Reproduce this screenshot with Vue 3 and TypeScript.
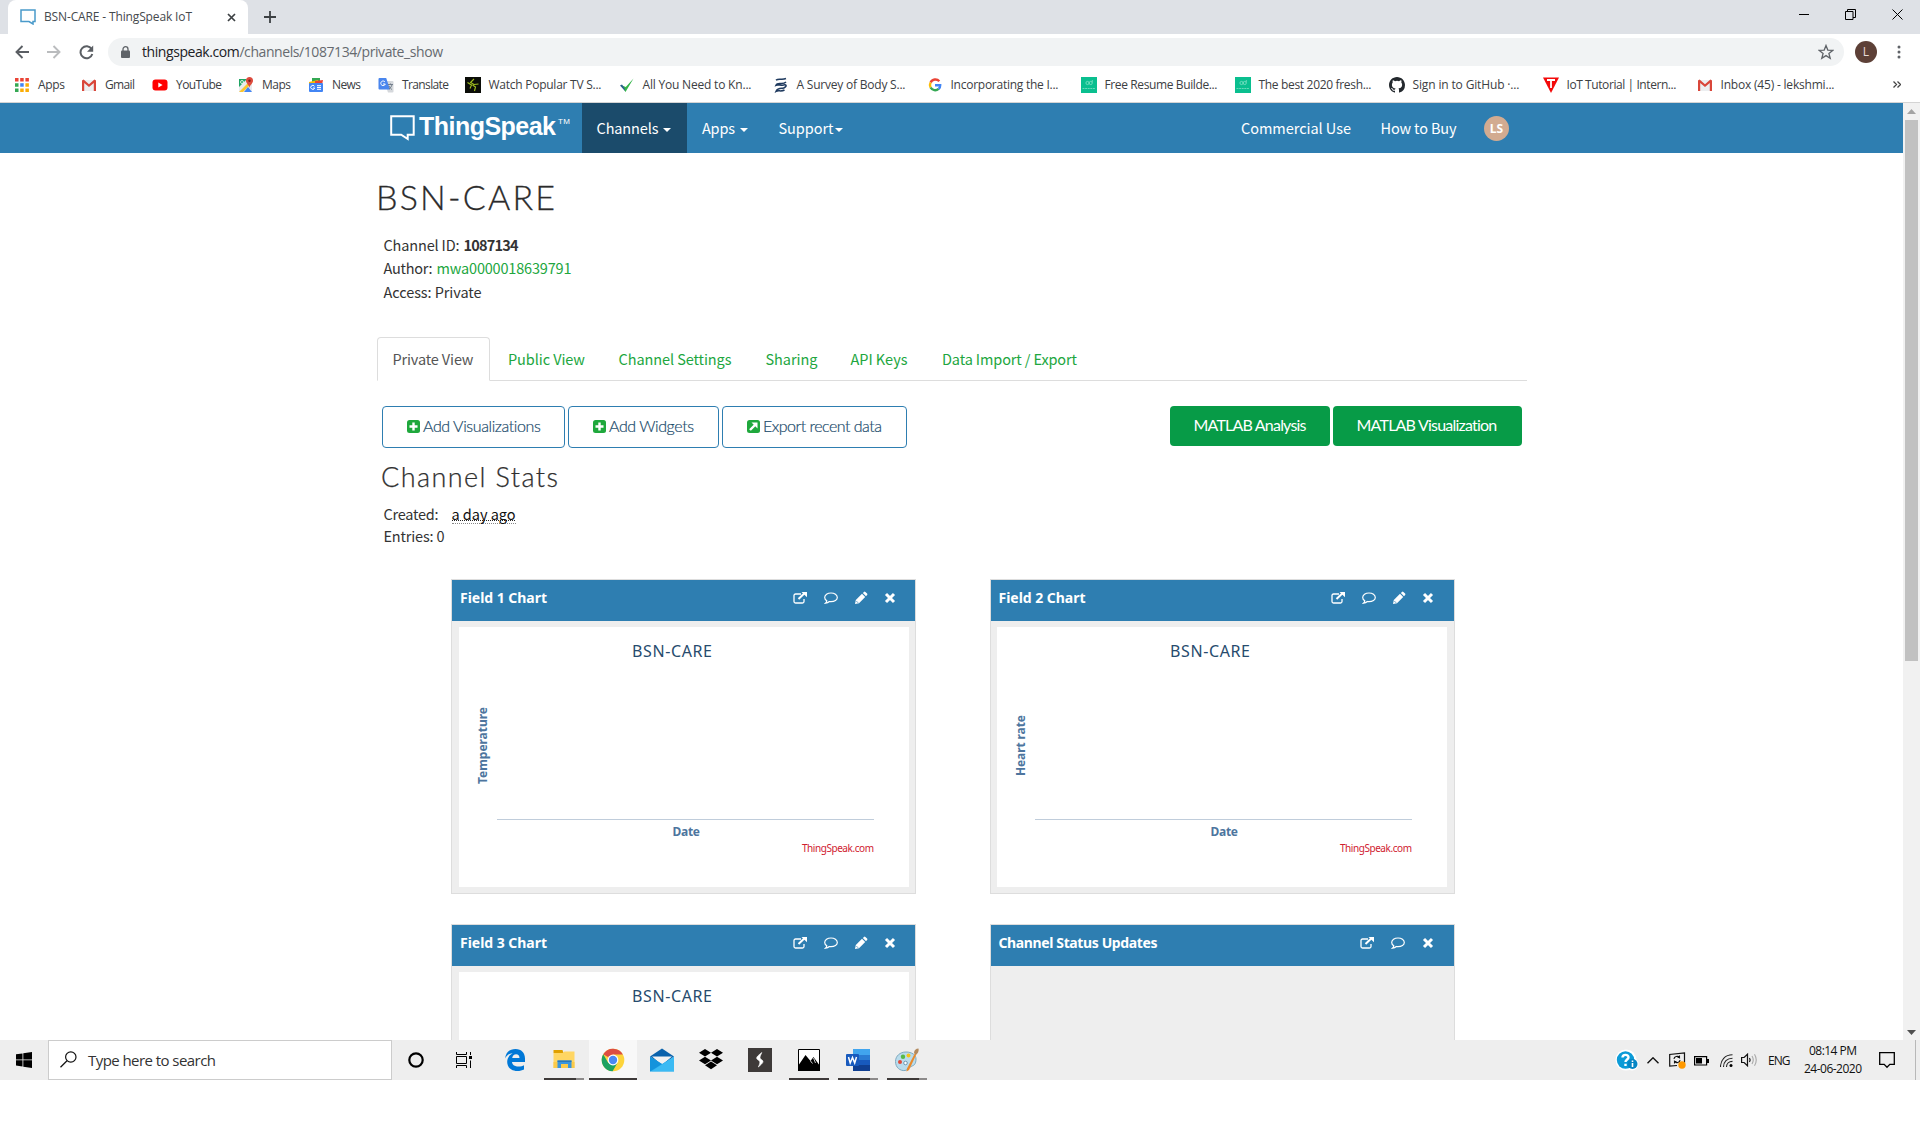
<script setup lang="ts">
interface Glyph { w: number; h: number; body: string }
interface Bookmark { label: string; width: number; cell: number; icon: string }
interface Panel { title: string; width: number; axis?: string; axisLen?: number; chart: boolean }
interface TaskItem { cell: number; w: number; h: number; body: string; line?: number; tail?: boolean; active?: boolean }

// Tracks a label so that it fills the given measure in pixels.
const vFit = {
  mounted(el: HTMLElement, binding: { value: number }) {
    const n = (el.textContent ?? '').trim().length
    const natural = el.getBoundingClientRect().width
    if (n > 1) {
      const spacing = (binding.value - natural) / (n - 1)
      el.style.letterSpacing = `${spacing.toFixed(3)}px`
      el.style.marginRight = `${(-spacing).toFixed(3)}px`
    }
  },
}

const gmail = '<path d="M1 3h14v11H1z" fill="#eceff1"/><path d="M1 3.4v10.6h2.2V6L8 10l4.8-4v8H15V3.4L13.4 2.500 8 7.200 2.600 2.500z" fill="#d9463a"/>'
const novo = '<path d="M0 0h16v16H0z" fill="#0abf8f"/><g fill="none" stroke="#8fe5cb" stroke-width=".7"><circle cx="6.500" cy="6" r="1.600"/><circle cx="9.700" cy="6" r="1.600"/><path d="M11.300 3V6M1.500 11.500h13" stroke-dasharray="2 .6"/></g>'

const bookmarks: Bookmark[] = [
  { label: 'Apps', width: 27, cell: 67, icon: '<g fill="#ea4335"><path d="M1 1h3.500v3.500H1zM6.200 1h3.500v3.500H6.200zM11.400 1h3.500v3.500h-3.500z"/></g><path d="M1 6.200h3.500v3.500H1zM1 11.400h3.500v3.500H1z" fill="#34a853"/><path d="M6.200 6.200h3.500v3.500H6.200z" fill="#4285f4"/><path d="M11.400 6.200h3.500v3.500h-3.500zM6.200 11.400h3.500v3.500H6.200zM11.400 11.400h3.500v3.500h-3.500z" fill="#fbad05"/>' },
  { label: 'Gmail', width: 30, cell: 71, icon: gmail },
  { label: 'YouTube', width: 46, cell: 86, icon: '<rect x=".5" y="2.500" width="15" height="11" rx="3" fill="#f00"/><path d="M6.300 5.500v5l4.300-2.500z" fill="#fff"/>' },
  { label: 'Maps', width: 29, cell: 70, icon: '<path d="M1 2h13v13H1z" fill="#e8eaed"/><path d="M1 2h8L1 10z" fill="#1fa463"/><path d="M1 15 13 3h1v3L5 15z" fill="#fbc52d"/><path d="M6 15 10 10l4 5z" fill="#4285f4"/><path d="M11.500 0a3.500 3.500 0 0 1 3.500 3.700C15 6.500 11.900 7.500 11.500 11c-.4-3.500-3.500-4.500-3.500-7.300A3.500 3.500 0 0 1 11.500 0z" fill="#dd4b3e"/><circle cx="11.500" cy="3.700" r="1.200" fill="#7a1e17"/><circle cx="4" cy="5" r="1.500" fill="none" stroke="#fff" stroke-width=".8"/>' },
  { label: 'News', width: 29, cell: 70, icon: '<path d="M4 1h8v5H4z" fill="#34a853"/><path d="m1 5 9-2 1 5H1z" fill="#fbbc04"/><path d="m7 4 8-1-1 5H7z" fill="#ea4335"/><rect x="1" y="6" width="14" height="9" rx="1" fill="#4285f4"/><path d="M6.500 9.300A2 2 0 1 0 6.700 11H5M9 8.700h4M9 10.500h4M9 12.300h4" fill="none" stroke="#fff"/>' },
  { label: 'Translate', width: 47, cell: 86.500, icon: '<path d="M6 4h8.500a1 1 0 0 1 1 1v9.500a1 1 0 0 1-1 1H10z" fill="#d5d8dc"/><path d="M1.500 1h6.700L12 12.500H1.500a1 1 0 0 1-1-1V2a1 1 0 0 1 1-1z" fill="#4a86ee"/><path d="M7 5A2.300 2.300 0 1 0 7.300 7H5" fill="none" stroke="#fff"/><path d="M10 7.500h5M12.500 6.500v1M14 7.500c-.5 2-1.500 3.500-3 4.500M11 9c1 2 2 3 3 3.500" fill="none" stroke="#6b7785" stroke-width=".9"/>' },
  { label: 'Watch Popular TV S...', width: 113, cell: 154, icon: '<path d="M0 0h16v16H0z" fill="#0b0d08"/><path d="M9 2 5.500 5.500 9 7.500l4.500-.5M2.500 5.500l4 2.500-1.500 3.500M7.500 8l3 2-1 4" fill="none" stroke="#a4c220" stroke-width="1.100"/>' },
  { label: 'All You Need to Kn...', width: 109, cell: 154, icon: '<path d="m2 8 4.500 7L14.500 1.500 6.800 10z" fill="#34b54a"/><path d="M1 8.500 3 7.500l2.500 4L6 14z" fill="#2a5d8f"/>' },
  { label: 'A Survey of Body S...', width: 109, cell: 154, icon: '<path d="M3 3.200C6 .8 8.500 3.500 13 1.500M13 5C10 8.500 4.500 4.500 3 8.200c2.500-1.200 6 1.200 9-.5 3 .8-1 3.800-3 3.500-3 0-5 .5-6 3.200 2.500-1.500 5 .6 8.500-1.400" fill="none" stroke="#1f3a5f" stroke-width="1.500"/>' },
  { label: 'Incorporating the I...', width: 108, cell: 154, icon: '<g fill="none" stroke-width="2.400"><path d="M12.300 4.300A5.200 5.200 0 0 0 3.600 5.500" stroke="#ea4335"/><path d="M3.600 5.500a5.200 5.200 0 0 0 0 5" stroke="#fbbc05"/><path d="M3.600 10.500a5.200 5.200 0 0 0 8 1.400" stroke="#34a853"/><path d="M11.600 12c1-.9 1.600-2.200 1.600-3.800H8" stroke="#4285f4"/></g>' },
  { label: 'Free Resume Builde...', width: 113, cell: 154, icon: novo },
  { label: 'The best 2020 fresh...', width: 113, cell: 154, icon: novo },
  { label: 'Sign in to GitHub ·...', width: 107, cell: 154, icon: '<path fill="#24292e" d="M8 0C3.580 0 0 3.580 0 8c0 3.540 2.290 6.530 5.470 7.590.4.070.55-.17.55-.38 0-.19-.01-.82-.01-1.490-2.010.37-2.530-.49-2.690-.94-.09-.23-.48-.94-.82-1.130-.28-.15-.68-.52-.01-.53.63-.01 1.080.58 1.230.82.72 1.210 1.870.87 2.330.66.070-.52.28-.87.51-1.070-1.780-.2-3.640-.89-3.640-3.950 0-.87.31-1.590.82-2.150-.08-.2-.36-1.020.080-2.120 0 0 .67-.21 2.200.82a7.400 7.400 0 0 1 4 0c1.530-1.040 2.200-.82 2.200-.82.44 1.100.16 1.920.080 2.120.51.56.82 1.270.82 2.150 0 3.070-1.870 3.750-3.650 3.950.29.25.54.73.54 1.480 0 1.070-.01 1.930-.01 2.200 0 .21.15.46.55.38A8 8 0 0 0 16 8c0-4.420-3.580-8-8-8z"/>' },
  { label: 'IoT Tutorial | Intern...', width: 110, cell: 154, icon: '<path d="M0 .5h16L8 16z" fill="#f30a0a"/><path d="M4 3h8M8 3v8" stroke="#fff" stroke-width="1.800"/>' },
  { label: 'Inbox (45) - lekshmi...', width: 114, cell: 154, icon: gmail },
]

const tabs = [
  { label: 'Public View', width: 77, cell: 110.500 },
  { label: 'Channel Settings', width: 113, cell: 147 },
  { label: 'Sharing', width: 52, cell: 85 },
  { label: 'API Keys', width: 57, cell: 91.500 },
  { label: 'Data Import / Export', width: 135, cell: 140 },
]

const plus = '<rect width="13" height="13" rx="2.500" fill="#1fa83c"/><path d="M6.500 2.500v8M2.500 6.500h8" stroke="#fff" stroke-width="2.400"/>'
const out = '<rect width="13" height="13" rx="2.500" fill="#1fa83c"/><path d="M3 10 8.500 4.500" stroke="#fff" stroke-width="2.400"/><path d="M4.500 2.500h6v6z" fill="#fff"/>'
const actions = [
  { label: 'Add Visualizations', width: 118, box: 183, icon: plus },
  { label: 'Add Widgets', width: 85, box: 151, icon: plus },
  { label: 'Export recent data', width: 119, box: 185, icon: out },
]

const panels: Panel[] = [
  { title: 'Field 1 Chart', width: 87, axis: 'Temperature', axisLen: 77, chart: true },
  { title: 'Field 2 Chart', width: 87, axis: 'Heart rate', axisLen: 61, chart: true },
  { title: 'Field 3 Chart', width: 87, chart: true },
  { title: 'Channel Status Updates', width: 159, chart: false },
]

const tools: Record<string, Glyph> = {
  open: { w: 14, h: 14, body: '<path d="M8 3H2.500A1.500 1.500 0 0 0 1 4.500v6A1.500 1.500 0 0 0 2.500 12h7a1.500 1.500 0 0 0 1.500-1.500V8" fill="none" stroke="#fff" stroke-width="1.300"/><path d="M5.500 8 12 1.800" stroke="#fff" stroke-width="2"/><path d="M8.500 1H14v5.300z" fill="#fff"/>' },
  talk: { w: 14, h: 14, body: '<path d="M7 2c3.500 0 6.300 1.900 6.300 4.400S10.500 10.700 7 10.700q-1 0-1.700-.2C4.300 11.500 3 12 1.500 12.200c.8-.8 1.200-1.400 1.300-2.500C1.500 8.900.7 7.700.7 6.400.7 3.900 3.500 2 7 2z" fill="none" stroke="#fff" stroke-width="1.200"/>' },
  edit: { w: 14, h: 14, body: '<path d="m1 13 .8-4L8 2.800 11.200 6 5 12.200zM8.800 2 10 .9a1 1 0 0 1 1.400 0l1.700 1.700a1 1 0 0 1 0 1.400L12 5.200z" fill="#fff"/><path d="m2.500 10.200 1.500 1.500" stroke="#2e7eb1" stroke-width=".9"/>' },
  shut: { w: 12, h: 14, body: '<path d="m2 3 8 8M10 3l-8 8" stroke="#fff" stroke-width="3"/>' },
}
const toolsOf = (p: Panel) => (p.chart ? ['open', 'talk', 'edit', 'shut'] : ['open', 'talk', 'shut'])

const tasks: TaskItem[] = [
  { cell: 48, w: 22, h: 24, body: '<path d="M1 10.500C2 4 6 1 11.500 1 17.500 1 21 5 21 10.500V14H8c.2 3 3 4.500 6.500 4.500 2.300 0 4.300-.6 5.500-1.300v4.300c-1.600.9-4 1.500-6.700 1.500C7 23 3.200 19 3.200 14c0-4 2-7 5.500-8.700C4.500 5.500 2.500 7.700 1 10.500zM8.200 10h7.300c0-2.400-1.200-3.800-3.400-3.800S8.600 7.600 8.200 10z" fill="#0078d7"/>' },
  { cell: 49, w: 22, h: 24, line: 40, tail: true, body: '<path d="M.5 4V2h9l1 3h-10z" fill="#e0a000"/><path d="M.5 5h9l2-1.500h10V20H.5z" fill="#ffd663"/><path d="M.5 14h21v6H.5z" fill="#fbca4a"/><path d="M4.500 20v-7.500h14V20H15v-4H8v4z" fill="#3a96dd"/><path d="M4.500 12.500h14V14h-14z" fill="#2677bd"/>' },
  { cell: 49, w: 24, h: 24, line: 48, active: true, body: '<circle cx="12" cy="12" r="11.300" fill="#fdd43b"/><path d="M12 12 2.200 6.300A11.300 11.300 0 0 1 21.900 6.600H12z" fill="#dc4e41"/><path d="M2.200 6.300A11.300 11.300 0 0 0 11.600 23.300L16.500 14.800 7.300 15z" fill="#1ca261"/><circle cx="12" cy="12" r="5.400" fill="#fff"/><circle cx="12" cy="12" r="4.200" fill="#4a89f3"/>' },
  { cell: 49, w: 24, h: 24, body: '<path d="M0 8.500 12 .5l12 8-12 9z" fill="#0a62ac"/><path d="M2 8.500h20L12 17z" fill="#f2f2f2"/><path d="M0 8.800v14.700h24V8.800L12 16z" fill="#28a8ea"/><path d="m0 8.800 12 7.200L0 23.500z" fill="#1493dc"/><path d="M24 8.800v14.700H1z" fill="#42c0f5" opacity=".75"/>' },
  { cell: 49, w: 24, h: 24, body: '<path d="m6 1 6 3.700L6 8.500 0 4.700zM18 1l6 3.700-6 3.800-6-3.800zM6 8.800l6 3.800-6 3.700-6-3.700zM18 8.800l6 3.800-6 3.700-6-3.700zM12 13.600l6 3.700-6 4-6-4z"/>' },
  { cell: 49, w: 24, h: 24, body: '<path d="M0 0h24v24H0z" fill="#3e3a39"/><path d="M13.800 4.500C9 8.500 7 10 10.200 12c2 1.200 2.300 2.500.1 7C15 15 16.500 13.500 13.300 11.500c-2-1.200-1.500-2.500.5-7z" fill="#fff" stroke="#fff" stroke-width=".6"/>' },
  { cell: 49, w: 22, h: 22, line: 40, body: '<path d="M.5.500h21v21H.5z" fill="#fff" stroke="#000"/><path d="M0 22v-5L7.500 6l5 6 3-4L22 17v5z"/><path d="m12.500 12 2 2.500M15.500 9l2 5" stroke="#fff" stroke-width=".8"/>' },
  { cell: 49, w: 24, h: 22, line: 40, tail: true, body: '<path d="M7 0h17v6H7z" fill="#41a5ee"/><path d="M7 6h17v5.500H7z" fill="#2b7cd3"/><path d="M7 11h17v5.500H7z" fill="#185abd"/><path d="M7 16h17v6H7z" fill="#103f91"/><rect y="5" width="13" height="12" rx="1" fill="#185abd"/><path d="m2.500 8 1.700 6L6.500 8.500l2.200 5.500L10.500 8" fill="none" stroke="#fff" stroke-width="1.500"/>' },
  { cell: 49, w: 24, h: 24, line: 40, tail: true, body: '<path d="M11 4c6 0 10 3 10 7 0 5-2 6.500-4 7-3 .8-3 4-7 4.500-5 .6-9.500-3-9.500-9C.5 8 5 4 11 4z" fill="#b9dcec" stroke="#7fa9bf"/><circle cx="5" cy="14" r="2" fill="#e04a3a"/><circle cx="8" cy="8.800" r="2.200" fill="#57b947"/><circle cx="13.500" cy="7.500" r="2" fill="#f5c21b"/><circle cx="10.500" cy="15" r="1.800" fill="#fff" stroke="#6e97ae"/><path d="m20 5 1.500 1L14 22l-2.500 1.500.5-3z" fill="#e98a2c"/><path d="M19 5c0-3 2-4.500 4.500-4.500C24 3 23 6 20.500 6.500z" fill="#b38a5e"/>' },
]
</script>

<template>
  <div class="screen">
    <header class="browser">
      <div class="strip">
        <div class="tab">
          <svg class="tab-icon" width="16" height="16" viewBox="0 0 16 16"><path d="M1 1h14v11.500h-2V15l-4-2.500H1z" fill="#fff" stroke="#4a9aca" stroke-width="1.500" /></svg>
          <div class="tab-title"><span v-fit="148">BSN-CARE - ThingSpeak IoT</span></div>
          <svg width="9" height="9" viewBox="0 0 9 9"><path d="m1 1 7 7M8 1 1 8" stroke="#3c4043" stroke-width="1.700" /></svg>
        </div>
        <svg class="new-tab" width="12" height="12" viewBox="0 0 12 12"><path d="M6 0v12M0 6h12" stroke="#3c4043" stroke-width="1.800" /></svg>
        <div class="window-buttons">
          <svg width="10" height="11" viewBox="0 0 10 11"><path d="M0 5.500h10" stroke="#000" /></svg>
          <svg width="11" height="11" viewBox="0 0 11 11"><path d="M.5 2.500h7.500v8H.5zM2.500 2.500v-2h8v8H8" fill="none" stroke="#000" /></svg>
          <svg width="11" height="11" viewBox="0 0 11 11"><path d="m.5.500 10 10M10.500.500l-10 10" stroke="#000" /></svg>
        </div>
      </div>
      <div class="toolbar">
        <svg width="14" height="14" viewBox="0 0 14 14"><path d="M14 7H1.500M7.500 1l-6 6 6 6" fill="none" stroke="#5a5e63" stroke-width="1.900" /></svg>
        <svg width="14" height="14" viewBox="0 0 14 14"><path d="M0 7h12.500M6.500 1l6 6-6 6" fill="none" stroke="#babcbe" stroke-width="1.900" /></svg>
        <svg width="15" height="15" viewBox="0 0 15 15"><path d="M12.600 4A6 6 0 1 0 13.300 9" fill="none" stroke="#5a5e63" stroke-width="2" /><path d="M14.200.500v6.300H8z" fill="#5a5e63" /></svg>
        <div class="address">
          <svg width="9" height="12" viewBox="0 0 9 12"><rect y="4.500" width="9" height="7.500" rx="1" fill="#5f6368" /><path d="M2 5V3.200a2.500 2.500 0 0 1 5 0V5" fill="none" stroke="#5f6368" stroke-width="1.300" /></svg>
          <span v-fit="301" class="url"><b>thingspeak.com</b>/channels/1087134/private_show</span>
          <svg class="star" width="16" height="16" viewBox="0 0 16 16"><path d="m8 1.500 1.800 4.600 4.900.3-3.800 3.100 1.300 4.800L8 11.600l-4.200 2.700 1.300-4.800-3.800-3.100 4.900-.3z" fill="none" stroke="#5f6368" stroke-width="1.300" /></svg>
        </div>
        <div class="profile">L</div>
        <svg class="more" width="4" height="14" viewBox="0 0 4 14"><g fill="#5f6368"><circle cx="2" cy="2" r="1.500" /><circle cx="2" cy="7" r="1.500" /><circle cx="2" cy="12" r="1.500" /></g></svg>
      </div>
      <nav class="bookmarks">
        <div v-for="b in bookmarks" :key="b.label" class="bookmark" :style="{ width: b.cell + 'px' }">
          <svg width="16" height="16" viewBox="0 0 16 16" v-html="b.icon"></svg>
          <span v-fit="b.width">{{ b.label }}</span>
        </div>
        <svg class="overflow" width="8" height="7" viewBox="0 0 8 7"><path d="m.5.500 3 3-3 3M4.500.500l3 3-3 3" fill="none" stroke="#444" stroke-width="1.300" /></svg>
      </nav>
    </header>

    <div class="viewport">
      <main class="page">
        <div class="navbar">
          <div class="brand">
            <svg width="25" height="26" viewBox="0 0 25 26"><path d="M1.200 1.200h22.500v18.500h-6V24l-6.500-4.300h-10z" fill="none" stroke="#fff" stroke-width="2" /></svg>
            <span v-fit="137" class="brand-name">ThingSpeak</span><span v-fit="12" class="tm">TM</span>
          </div>
          <div class="menu active"><span v-fit="62">Channels</span><i class="caret"></i></div>
          <div class="menu apps"><span v-fit="33">Apps</span><i class="caret"></i></div>
          <div class="menu support"><span v-fit="55">Support</span><i class="caret"></i></div>
          <div class="nav-right">
            <span class="link-a"><span v-fit="110">Commercial Use</span></span>
            <span class="link-b"><span v-fit="76">How to Buy</span></span>
            <span class="user">LS</span>
          </div>
        </div>

        <div class="content">
          <h1><span v-fit="179">BSN-CARE</span></h1>
          <div class="meta">
            <p><span v-fit="76">Channel ID:</span><strong v-fit="55">1087134</strong></p>
            <p><span v-fit="49">Author:</span><a v-fit="135">mwa0000018639791</a></p>
            <p><span v-fit="98">Access: Private</span></p>
          </div>

          <div class="tabs">
            <div class="current"><span v-fit="81">Private View</span></div>
            <div v-for="t in tabs" :key="t.label" class="other" :style="{ width: t.cell + 'px' }"><span v-fit="t.width">{{ t.label }}</span></div>
          </div>

          <div class="actions">
            <div v-for="a in actions" :key="a.label" class="outline" :style="{ width: a.box + 'px' }">
              <svg width="13" height="13" viewBox="0 0 13 13" v-html="a.icon"></svg>
              <span v-fit="a.width">{{ a.label }}</span>
            </div>
            <div class="matlab first"><span v-fit="113">MATLAB Analysis</span></div>
            <div class="matlab second"><span v-fit="141">MATLAB Visualization</span></div>
          </div>

          <h2><span v-fit="177">Channel Stats</span></h2>
          <div class="stats">
            <p><span v-fit="55">Created:</span><span class="ago"><span v-fit="64">a day ago</span></span></p>
            <p><span v-fit="61">Entries: 0</span></p>
          </div>

          <div class="panels">
            <section v-for="p in panels" :key="p.title" class="panel">
              <div class="panel-head">
                <span v-fit="p.width">{{ p.title }}</span>
                <div class="tools">
                  <svg v-for="t in toolsOf(p)" :key="t" :class="t" :width="tools[t].w" :height="tools[t].h" :viewBox="`0 0 ${tools[t].w} ${tools[t].h}`" v-html="tools[t].body"></svg>
                </div>
              </div>
              <div class="panel-body">
                <svg v-if="p.chart" class="chart" width="450" height="260" viewBox="0 0 450 260">
                  <text class="chart-title" x="173" y="30" textLength="80">BSN-CARE</text>
                  <template v-if="p.axis">
                    <text class="axis" :transform="`translate(28 ${118.5 + (p.axisLen ?? 0) / 2}) rotate(-90)`" :textLength="p.axisLen">{{ p.axis }}</text>
                    <path d="M38 192.500h377" stroke="#c0cddb" />
                    <text class="axis" x="213.500" y="209" textLength="27.500">Date</text>
                    <text class="credit" x="343" y="225" textLength="72">ThingSpeak.com</text>
                  </template>
                </svg>
              </div>
            </section>
          </div>
        </div>
      </main>
      <aside class="scrollbar">
        <svg width="9" height="5" viewBox="0 0 9 5"><path d="M0 5 4.500 0 9 5z" fill="#a3a3a3" /></svg>
        <div class="thumb"></div>
        <svg width="9" height="5" viewBox="0 0 9 5"><path d="M0 0h9L4.500 5z" fill="#505050" /></svg>
      </aside>
    </div>

    <footer class="taskbar">
      <div class="start"><svg width="16" height="16" viewBox="0 0 16 16"><path d="M0 2.300 6.500 1.400v6.100H0zM7.300 1.300 16 0v7.500H7.300zM0 8.300h6.500v6.200L0 13.600zM7.300 8.300H16V16l-8.700-1.300z" /></svg></div>
      <div class="search">
        <svg width="17" height="17" viewBox="0 0 17 17"><circle cx="10.800" cy="6" r="5.200" fill="none" stroke="#111" stroke-width="1.200" /><path d="M7 9.700.500 16.300" stroke="#111" stroke-width="1.300" /></svg>
        <span v-fit="128">Type here to search</span>
      </div>
      <div class="cortana"><svg width="16" height="16" viewBox="0 0 16 16"><circle cx="8" cy="8" r="6.700" fill="none" stroke="#000" stroke-width="2.200" /></svg></div>
      <div class="task-view"><svg width="17" height="16" viewBox="0 0 17 16"><path d="M.5 0v2.500h10V0M.5 16v-2.500h10V16M.5 4.500h10v7H.5zM14.500 0v3M14.500 8.500V16" fill="none" stroke="#000" /><path d="M13 4h3v3h-3z" /></svg></div>
      <div v-for="(t, i) in tasks" :key="i" class="task" :class="{ on: t.active }" :style="{ width: t.cell + 'px' }">
        <svg :width="t.w" :height="t.h" :viewBox="`0 0 ${t.w} ${t.h}`" v-html="t.body"></svg>
        <i v-if="t.line" class="line" :class="{ tail: t.tail }" :style="{ width: t.line + 'px' }"></i>
      </div>
      <div class="tray">
        <svg class="help" width="24" height="24" viewBox="0 0 24 24"><circle cx="11" cy="12" r="10.500" fill="#fff" /><circle cx="17" cy="16" r="6.500" fill="#fff" /><circle cx="10.500" cy="12" r="8.700" fill="#0c9bd7" /><path d="M7.500 9.500c0-3.500 6-3.500 6-.3 0 2.300-3 2.200-3 4.800M10.500 15.800v2.200" fill="none" stroke="#fff" stroke-width="2.400" /><circle cx="17.500" cy="16" r="5" fill="#0786c4" /><path d="M17.500 15v4M17.500 12.500v1.500" stroke="#fff" stroke-width="1.600" /></svg>
        <svg class="up" width="12" height="7" viewBox="0 0 12 7"><path d="m.5 6.300 5.500-5.500 5.500 5.500" fill="none" stroke="#111" stroke-width="1.400" /></svg>
        <svg class="sync" width="17" height="17" viewBox="0 0 17 17"><path d="M8 13.500.7 14V2.500L15.500.8v10" fill="none" stroke="#111" stroke-width="1.200" /><path d="M5 7c0-2.500 4-3.500 5.500-1.500V3.500M10.500 5.500h-2M11 8c0 2.500-4 3.500-5.500 1.500v2M5.500 9.500h2" fill="none" stroke="#111" stroke-width="1.100" /><circle cx="13" cy="13" r="3.700" fill="#f90" /></svg>
        <svg class="battery" width="15" height="10" viewBox="0 0 15 10"><path d="M.600.600h12v8.400H.600z" fill="none" stroke="#000" stroke-width="1.200" /><path d="M2 2h6v5.600H2zM13 3h2v4h-2z" /></svg>
        <svg class="wifi" width="13" height="13" viewBox="0 0 13 13"><g fill="none" stroke="#222" stroke-width="1.100"><path d="M.500 13C.500 6 5 .800 12.500.800M3.500 13c0-5 3.500-8.800 9-8.800M6.500 13c0-3.200 2.500-5.600 6-5.600" /></g><circle cx="11" cy="11.500" r="1.500" /></svg>
        <svg class="sound" width="17" height="14" viewBox="0 0 17 14"><path d="M.600 4.500h2.500L6.500 1.200v11.600L3.100 9.500H.600z" fill="none" stroke="#111" stroke-width="1.200" /><path d="M8.500 5q1.300 2 0 4" fill="none" stroke="#111" stroke-width="1.200" /><path d="M11 3q2.500 4 0 8M13.500 1.200q3.500 5.800 0 11.600" fill="none" stroke="#a8a8a8" stroke-width="1.100" /></svg>
        <span class="lang"><span v-fit="22.500">ENG</span></span>
        <div class="clock"><span v-fit="48">08:14 PM</span><span v-fit="58">24-06-2020</span></div>
        <svg class="notes" width="16" height="17" viewBox="0 0 16 17"><path d="M.700.700h14.600v11.600h-4.500L8 15.200l-2.800-2.900H.700z" fill="none" stroke="#000" stroke-width="1.300" /></svg>
        <i class="desktop"></i>
      </div>
    </footer>
  </div>
</template>

<style>
html, body { margin: 0; background: #fff; overflow: hidden; }
</style>

<style scoped>
.screen { width: 1920px; height: 1136px; overflow: hidden; background: #fff; font-family: "Open Sans", "Noto Sans", sans-serif; color: #333; }
.screen * { box-sizing: border-box; }
.screen svg { display: block; flex: none; }
span, a, strong { white-space: nowrap; flex: none; display: inline-block; }
p, h1, h2 { margin: 0; font-weight: 400; }

.browser { height: 103px; border-bottom: 1px solid #d4d4d4; }
.strip { height: 34px; background: #dee1e6; display: flex; align-items: flex-start; }
.tab { margin-left: 8px; width: 240px; height: 34px; background: #fff; border-radius: 8px 8px 0 0; display: flex; align-items: center; padding-left: 12px; font-size: 12px; color: #45494d; }
.tab-title { width: 183px; margin-left: 8px; line-height: 34px; }
.tab-icon { margin-top: -1px; }
.new-tab { margin: 11px 0 0 16px; }
.window-buttons { margin-left: auto; display: flex; width: 121px; padding-top: 9px; }
.window-buttons svg + svg { margin-left: 36px; }
.window-buttons svg:nth-child(2) { margin-left: 36px; }
.toolbar { height: 35px; display: flex; align-items: center; padding: 1px 0 0 15px; }
.toolbar > svg { margin-right: 18px; }
.toolbar > svg:nth-child(3) { margin-right: 14px; }
.address { width: 1736px; height: 28px; border-radius: 14px; background: #f1f3f4; display: flex; align-items: center; padding-left: 13px; }
.url { margin-left: 12px; font-size: 14px; color: #666a6f; line-height: 28px; }
.url b { font-weight: 400; color: #202124; }
.star { margin-left: auto; margin-right: 10px; }
.profile { width: 22px; height: 22px; border-radius: 50%; background: #5d4037; color: #e8dcd8; font-size: 12px; line-height: 22px; text-align: center; margin-left: 11px; }
.toolbar > .more { margin: 0 0 0 20px; }
.bookmarks { height: 31px; display: flex; align-items: center; padding-left: 14px; font-size: 12px; color: #3c4043; line-height: 31px; }
.bookmark { display: flex; align-items: center; flex: none; height: 31px; }
.bookmark span { margin-left: 8px; }
.overflow { margin-left: auto; margin-right: 19px; }

.viewport { height: 937px; display: flex; overflow: hidden; }
.page { width: 1903px; height: 937px; overflow: hidden; font-family: "Noto Sans CJK SC", "Noto Sans", sans-serif; font-size: 14.500px; }
.scrollbar { width: 17px; background: #f1f1f1; display: flex; flex-direction: column; align-items: center; padding: 6px 0 5px; }
.thumb { width: 13px; height: 541px; background: #c1c1c1; margin: 6px 0 auto; }

.navbar { height: 50px; background: #2e7eb1; display: flex; color: #fff; line-height: 48px; padding-left: 390px; }
.brand { width: 192px; display: flex; font-family: "Liberation Sans", Arial, sans-serif; font-weight: 700; }
.brand svg { margin-top: 12px; }
.brand-name { font-size: 25px; margin-left: 4px; line-height: 47px; }
.tm { font-size: 8px; font-weight: 400; line-height: 38px; margin-left: 2px; }
.menu { display: flex; align-items: center; height: 50px; flex: none; }
.menu.active { width: 105px; background: #1b4b6b; padding-left: 14.500px; }
.menu.apps { width: 76px; padding-left: 15px; }
.menu.support { padding-left: 15.500px; }
.caret { border: 4px solid transparent; border-top-color: #fff; border-bottom: 0; margin-left: 5px; margin-top: 4px; }
.support .caret { margin-left: 1px; }
.nav-right { display: flex; align-items: center; margin-left: auto; width: 662px; }
.link-a { width: 139.500px; }
.link-b { width: 103.500px; }
.user { width: 25px; height: 25px; border-radius: 50%; background: #d2ab91; font: 700 12px/25px "Open Sans", sans-serif; text-align: center; margin-top: 1px; }

.content { width: 1150px; margin-left: 377px; }
h1 { font: 300 34px/40px Lato, sans-serif; height: 40px; margin-top: 24px; padding-left: 0; color: #2b2b2b; -webkit-text-stroke: .3px #2b2b2b; }
h1 span { margin-left: -1px; }
.meta { padding: 15.500px 0 0 6.500px; }
.meta p { height: 23.500px; line-height: 23.500px; display: flex; gap: 4px; }
.meta a { color: #21a63e; }
.tabs { height: 44px; margin-top: 33.500px; border-bottom: 1px solid #ddd; display: flex; line-height: 42px; color: #21a63e; }
.current { width: 113px; height: 44px; border: 1px solid #ddd; border-bottom-color: #fff; border-radius: 4px 4px 0 0; padding-left: 14.500px; color: #555; line-height: 42px; margin-right: 18px; flex: none; background: #fff; }
.other { flex: none; padding-top: 1px; }
.actions { display: flex; margin: 25px 5px 0; gap: 3px; font-family: Lato, sans-serif; font-size: 16px; height: 42px; }
.outline { height: 42px; border: 1px solid #2e7eb1; border-radius: 4px; display: flex; align-items: center; padding-left: 24px; font-weight: 300; color: #1b4b6b; flex: none; line-height: 38px; padding-bottom: 1px; -webkit-text-stroke: .2px #1b4b6b; }
.outline span { margin-left: 3px; }
.matlab { height: 40px; background: #079b47; border-radius: 4px; color: #fff; line-height: 38px; padding-left: 23.500px; flex: none; }
.matlab.first { width: 160px; margin-left: auto; }
.matlab.second { width: 189px; }
h2 { font: 300 27px/32px Lato, sans-serif; height: 32px; padding-left: 4px; margin-top: 13px; color: #2f2f2f; -webkit-text-stroke: .25px #2f2f2f; }
.stats { padding: 10px 0 0 6.500px; line-height: 22px; }
.stats p { height: 22.500px; display: flex; }
.ago { margin-left: 13px; color: #111; height: 21px; background: repeating-linear-gradient(90deg, #222 0 1px, transparent 1px 2px) 0 17px / 100% 1px no-repeat; border-bottom: 1px dotted #888; width: 64px; }

.panels { display: grid; grid-template-columns: 465px 465px; column-gap: 74px; row-gap: 30px; margin: 31px 0 0 74px; }
.panel { width: 465px; height: 315px; border: 1px solid #ddd; background: #eee; }
.panel-head { height: 41px; background: #2e7eb1; color: #fff; display: flex; font: 700 14px/36px "Noto Sans", sans-serif; padding-left: 8px; }
.tools { margin-left: auto; display: flex; padding: 11px 19px 0 0; }
.tools svg { margin-left: 17px; }
.tools .edit { margin-left: 16px; }
.tools .shut { margin-left: 16px; }
.tools .talk + .shut { margin-left: 17px; }
.panel:nth-child(even) .tools { padding-right: 20px; }
.panel-body { padding: 6px 7px; }
.panel:nth-child(even) .panel-body { padding-left: 6px; }
.panel:nth-child(even) .panel-head { padding-left: 7.500px; }
.chart { background: #fff; }
.chart-title { font: 400 16px "Noto Sans", sans-serif; fill: #274b6d; }
.axis { font: 700 12px "Noto Sans", sans-serif; fill: #4d759e; }
.credit { font: 400 10px "Noto Sans", sans-serif; fill: #d02030; }

.taskbar { height: 40px; background: #eee; display: flex; color: #222; }
.start { width: 48px; padding: 12px 16px; }
.search { width: 344px; border: 1px solid #ccc; background: #fff; display: flex; align-items: center; font-size: 15px; padding-left: 11px; color: #333; }
.search svg { margin-top: -1px; }
.search span { margin-left: 11px; }
.cortana { width: 64px; padding: 12px 0 0 15.500px; }
.task-view { width: 35px; padding-top: 12px; }
.task { height: 40px; display: flex; align-items: center; justify-content: center; position: relative; flex: none; }
.task.on::before { content: ""; position: absolute; inset: 0 0 0 1px; background: #f8f8f8; }
.task.on svg { position: relative; }
.line { position: absolute; left: 50%; bottom: 0; transform: translateX(-50%); height: 2px; background: #3e3a39; }
.line.tail { background: linear-gradient(90deg, #3e3a39 32px, #8c8a8a 32px); }
.tray { margin-left: auto; width: 305px; display: flex; align-items: center; font-size: 12px; color: #111; }
.up { margin-left: 8px; }
.sync { margin-left: 10px; }
.battery { margin-left: 8px; margin-top: 1px; }
.wifi { margin-left: 11px; margin-top: 1px; }
.sound { margin-left: 8px; }
.lang { margin-left: 10px; width: 23px; }
.clock { width: 86px; margin-left: -1px; display: flex; flex-direction: column; align-items: center; line-height: 18px; }
.notes { margin-left: 3px; }
.desktop { width: 1px; height: 40px; background: #b8b8b8; margin-left: auto; margin-right: 4px; }
</style>
